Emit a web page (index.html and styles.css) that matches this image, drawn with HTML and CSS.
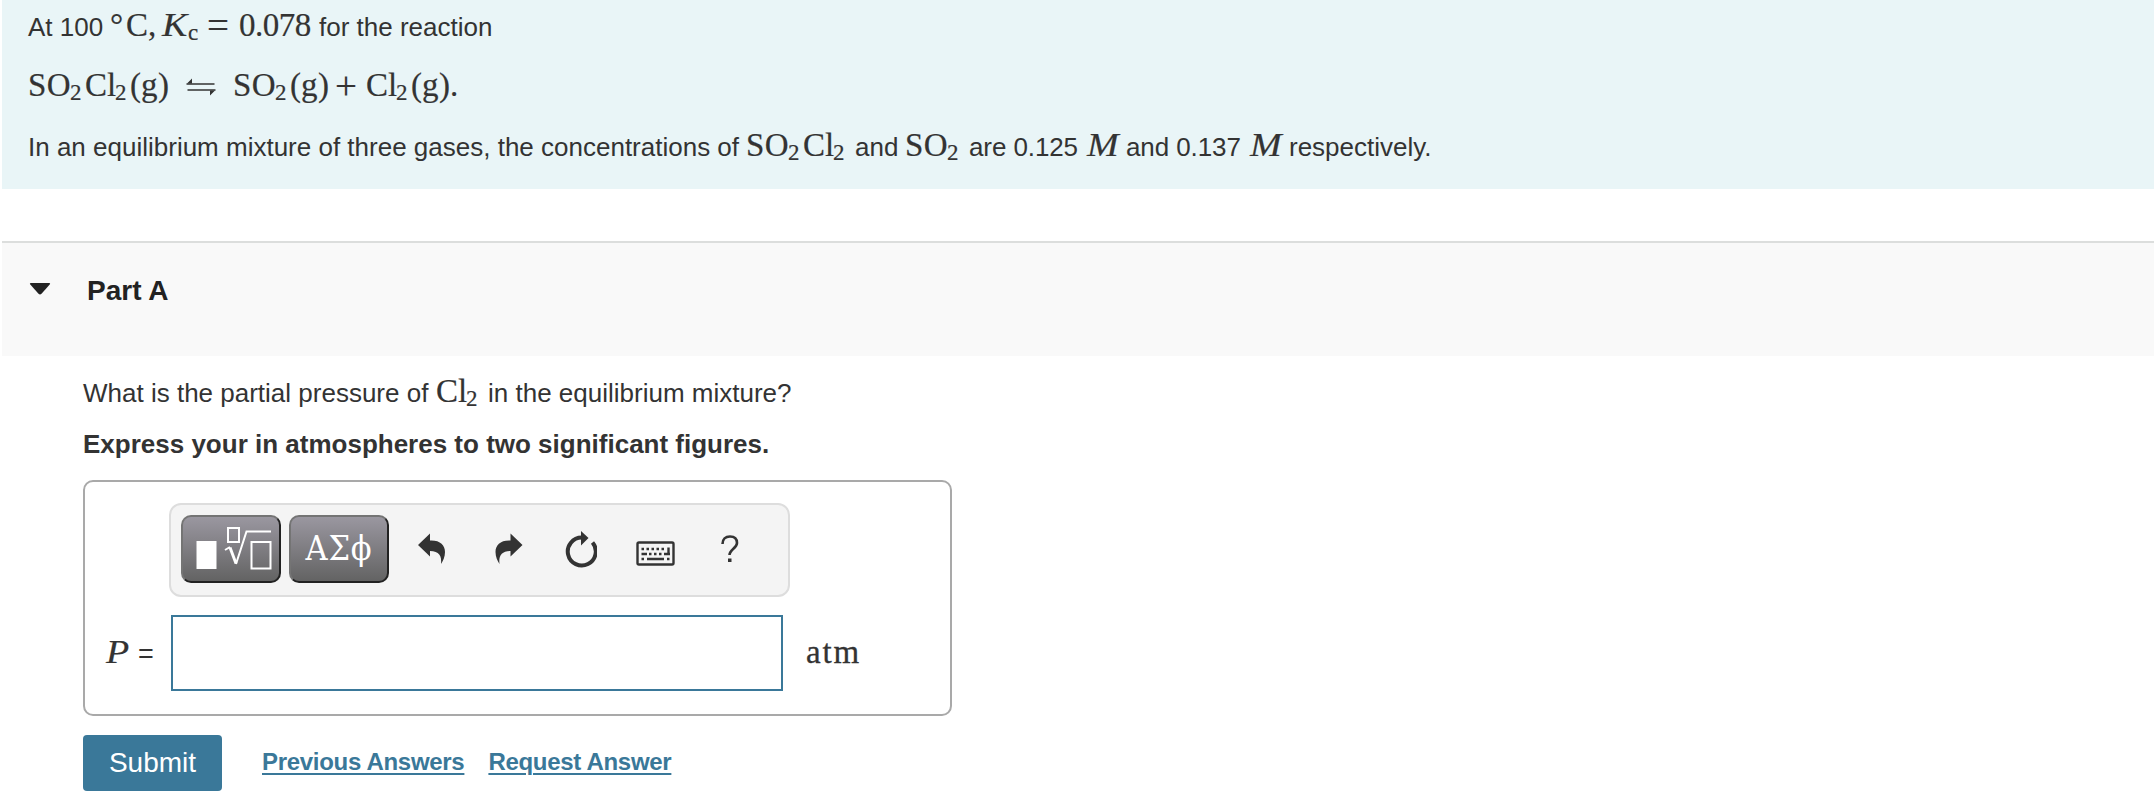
FILE: index.html
```html
<!DOCTYPE html>
<html lang="en">
<head>
  <meta charset="UTF-8" />
  <meta name="viewport" content="width=device-width, initial-scale=1.0" />
  <title>Part A</title>
  <link rel="stylesheet" href="styles.css">
</head>
<body>
  <section class="intro">
    <p class="line line-kc"><span class="t w-at">At 100</span><span class="m deg w-deg">°</span><span class="m w-c">C</span><span class="m w-comma">,</span><span class="m it w-k">K</span><span class="m sub w-kc">c</span><span class="m equals w-eq">=</span><span class="m num w-num">0.078</span><span class="t">for the reaction</span></p>
    <p class="line line-reaction"><span class="m so w-so">SO</span><span class="m sub w-2">2</span><span class="m cl w-cl">Cl</span><span class="m sub w-2b">2</span><span class="m paren w-p">(</span><span class="m w-g">g</span><span class="m paren w-end">)</span><svg class="arrows" viewBox="0 0 30 18" width="30" height="18"><path d="M.5 6h28M1.500 12h28" /><path class="tip" d="M1 5.500l5-5v5zM29 12.500l-5 5v-5z" /></svg><span class="m so w-so">SO</span><span class="m sub w-2b">2</span><span class="m paren w-p">(</span><span class="m w-g">g</span><span class="m paren w-close">)</span><span class="m plus w-plus">+</span><span class="m cl w-cl">Cl</span><span class="m sub w-2b">2</span><span class="m paren w-p">(</span><span class="m w-g">g</span><span class="m paren w-last">)</span><span class="m">.</span></p>
    <p class="line line-mix"><span class="t w-mix">In an equilibrium mixture of three gases, the concentrations of</span><span class="m so w-so">SO</span><span class="m sub w-2">2</span><span class="m cl w-cl">Cl</span><span class="m sub w-2c">2</span><span class="t w-and">and</span><span class="m so w-so">SO</span><span class="m sub w-2c">2</span><span class="t w-are">are 0.125</span><span class="m it w-m">M</span><span class="t w-and2">and 0.137</span><span class="m it w-m">M</span><span class="t">respectively.</span></p>
  </section>

  <header class="part">
    <svg class="caret" viewBox="0 0 22 12" width="22" height="12"><path d="M2 0h18q2 0 .5 1.800l-8 9q-1.500 1.600-3 0l-8-9Q0 0 2 0z" /></svg>
    <h2>Part A</h2>
  </header>

  <main class="question">
    <p class="line prompt"><span class="t w-what">What is the partial pressure of</span><span class="m cl w-cl">Cl</span><span class="m sub w-2c">2</span><span class="t">in the equilibrium mixture?</span></p>
    <p class="express">Express your in atmospheres to two significant figures.</p>

    <div class="answer">
      <div class="toolbar">
        <button class="tool dark" type="button" aria-label="Templates">
          <svg viewBox="0 0 100 68" width="100" height="68">
            <path class="solid" d="M15.500 26h20v28h-20z" />
            <path class="thin" d="M47 13h11v14H47zM70.500 27h19v26.500h-19z" />
            <path class="thin" d="M44 35l5-3" />
            <path class="thick" d="M49 32.500l6 16" />
            <path class="thin" d="M55 49l10.500-32.500H90" />
          </svg>
        </button>
        <button class="tool dark greek" type="button"><span>ΑΣϕ</span></button>
        <svg class="icon undo" viewBox="0 0 28 32" width="28" height="32"><path d="M0 12L12 .500V7.500C22 7 27 12 27 19c0 5-2 9-4 12 1-8-2-13-11-13v5.500z" /></svg>
        <svg class="icon redo" viewBox="0 0 28 32" width="28" height="32"><path d="M27.500 12L15.500.500V7.500C5.500 7 .5 12 .5 19c0 5 2 9 4 12-1-8 2-13 11-13v5.500z" /></svg>
        <svg class="icon reset" viewBox="0 0 32 37" width="32" height="37"><path class="ring" d="M17 6.500A14 14 0 1 0 27.500 11.500" /><path d="M16 0l7.500 7L16 14.500z" /></svg>
        <svg class="icon keyboard" viewBox="0 0 39 25" width="39" height="25"><rect class="frame" x="1.500" y="1.500" width="36" height="22" rx="1.500" /><path class="keys" d="M5.500 8h2.500m2.500 0h2.500m2.500 0h2.500m2.500 0h2.500m2.500 0h2.500M5.500 13h5.500m2 0h2.500m2.500 0h2.500m2.500 0h2.500m2.500 0h6M5.500 18h2.500m3 0h17m3 0h2.500" /><path class="keys" d="M32.500 6.500v7.500" /></svg>
        <svg class="icon help" viewBox="0 0 18 28" width="18" height="28"><path d="M1.500 9C1.500 4 4.500 1.500 9 1.500s7 2.500 7 6.500c0 5-7.500 6.500-7.500 12" /><path class="dot" d="M7 23.500h3.500V27H7z" /></svg>
      </div>
      <div class="entry">
        <label for="pressure"><span class="m it w-pres">P</span><span class="eq">=</span></label>
        <input id="pressure" type="text" />
        <span class="unit">atm</span>
      </div>
    </div>

    <div class="actions">
      <button class="submit" type="button">Submit</button>
      <a class="previous" href="#">Previous Answers</a>
      <a href="#">Request Answer</a>
    </div>
  </main>
</body>
</html>
```
FILE: styles.css
```css
* {
  box-sizing: border-box;
}
body {
  margin: 0;
  padding-left: 2px;
  background: #ffffff;
  color: #333333;
  font-family: "Liberation Sans", Arial, sans-serif;
  font-size: 26px;
  overflow: hidden;
}
p, h2 {
  margin: 0;
}

/* intro */
.intro {
  height: 189px;
  padding: 5px 0 0 26px;
  background: #e9f5f7;
}
.line {
  display: flex;
  align-items: baseline;
  height: 60px;
  line-height: 40px;
  white-space: nowrap;
}
.m {
  font-family: "Liberation Serif", "Times New Roman", serif;
  font-size: 33px;
  -webkit-text-stroke: 0.200px #333333;
}
.it {
  font-style: italic;
  transform: scaleX(1.15);
  transform-origin: 0 0;
}
.so { letter-spacing: 0.5px; }
.num { letter-spacing: -0.5px; }
.sub {
  font-size: 23px;
  transform: translateY(4px);
}
.equals, .plus {
  font-size: 39px;
  line-height: 20px;
  transform: translateY(3px);
}
.arrows {
  width: 30px;
  margin-right: 17px;
  fill: none;
  stroke: #333333;
  stroke-width: 1.600;
}
.arrows .tip {
  fill: #333333;
  stroke: none;
}

/* advance widths of the formula parts */
.w-at { width: 82px; }
.w-deg { width: 16px; }
.w-c { width: 22px; }
.w-comma { width: 14px; }
.w-k { width: 26px; }
.w-kc { width: 19px; }
.w-eq { width: 32px; }
.w-num { width: 80px; }
.w-so { width: 42px; }
.w-2 { width: 15px; }
.w-2b { width: 15px; }
.w-2c { width: 22px; }
.w-cl { width: 30px; }
.w-p { width: 11px; }
.w-g { width: 17px; }
.w-end { width: 28px; }
.w-close { width: 17px; }
.w-plus { width: 31px; }
.w-last { width: 11px; }
.w-mix { width: 718px; }
.w-and { width: 50px; }
.w-are {
  width: 118px;
  letter-spacing: -0.1px;
}
.w-m { width: 39px; }
.w-and2 {
  width: 124px;
  letter-spacing: -0.1px;
}
.w-what { width: 353px; }
.w-pres { width: 32px; }

/* part header */
.part {
  display: flex;
  align-items: flex-start;
  height: 115px;
  margin-top: 52px;
  padding: 32px 0 0 27px;
  border-top: 2px solid #dcdedd;
  background: #f9f9f9;
  color: #222222;
}
.part h2 {
  margin-left: 36px;
  font-size: 28px;
  line-height: 32px;
}
.caret {
  margin-top: 8px;
  fill: #222222;
}

/* question */
.question {
  padding: 15px 0 0 81px;
}
.prompt {
  height: 57px;
}
.express {
  height: 52px;
  line-height: 32px;
  font-weight: bold;
}
.answer {
  width: 869px;
  height: 236px;
  padding: 21px 0 0 20px;
  border: 2px solid #a9a9a9;
  border-radius: 10px;
}
.toolbar {
  display: flex;
  align-items: flex-start;
  width: 621px;
  height: 94px;
  margin-left: 64px;
  padding: 10px;
  border: 2px solid #dddddd;
  border-radius: 12px;
  background: #f4f4f4;
}
.tool {
  display: flex;
  flex: none;
  align-items: center;
  justify-content: center;
  width: 100px;
  height: 68px;
  margin-right: 8px;
  padding: 0;
  border: 2px solid;
  border-color: #747474 #222222 #222222 #747474;
  border-radius: 10px;
  background: linear-gradient(#9a97a0, #636363);
  color: #ffffff;
}
.tool svg {
  flex: none;
  fill: none;
  stroke: #ffffff;
}
.tool .solid {
  fill: #ffffff;
  stroke: none;
}
.tool .thin { stroke-width: 2; }
.tool .thick { stroke-width: 3; }
.greek {
  padding-bottom: 2px;
  font-family: "DejaVu Serif Condensed", "DejaVu Serif", serif;
  font-size: 34px;
  line-height: 40px;
  letter-spacing: 0.8px;
}
.icon {
  flex: none;
  fill: #333333;
}
.undo { margin: 18px 0 0 21px; }
.redo { margin: 18px 0 0 49px; }
.reset { margin: 16px 0 0 42px; }
.keyboard { margin: 26px 0 0 39px; }
.help { margin: 20px 0 0 46px; }
.ring, .frame, .keys, .help {
  fill: none;
  stroke: #333333;
}
.ring { stroke-width: 4; }
.frame { stroke-width: 2.400; }
.keys { stroke-width: 2.400; }
.help { stroke-width: 2.600; }
.help .dot {
  fill: #333333;
  stroke: none;
}
.entry {
  display: flex;
  height: 76px;
  margin-top: 18px;
}
.entry label {
  display: flex;
  align-items: baseline;
  width: 65px;
  margin-left: 1px;
  padding-top: 18px;
  line-height: 38px;
}
.eq { font-size: 27px; }
.entry input {
  width: 612px;
  height: 76px;
  padding: 0 12px;
  border: 2px solid #3a7899;
  background: #ffffff;
  font-size: 28px;
}
.unit {
  margin-left: 23px;
  padding-top: 18px;
  font-family: "Liberation Serif", "Times New Roman", serif;
  font-size: 33px;
  line-height: 38px;
  letter-spacing: 1.800px;
  -webkit-text-stroke: 0.300px #333333;
}

/* actions */
.actions {
  display: flex;
  align-items: center;
  margin-top: 19px;
}
.submit {
  width: 139px;
  height: 56px;
  padding: 0;
  border: none;
  border-radius: 4px;
  background: #3a7899;
  color: #ffffff;
  font-family: inherit;
  font-size: 28px;
}
.actions a {
  margin-bottom: 2px;
  color: #3a7899;
  font-size: 24px;
  font-weight: bold;
  letter-spacing: -0.3px;
  text-underline-offset: 3px;
  text-decoration-thickness: 2px;
}
.actions .previous {
  margin-left: 40px;
  margin-right: 24px;
}
```
